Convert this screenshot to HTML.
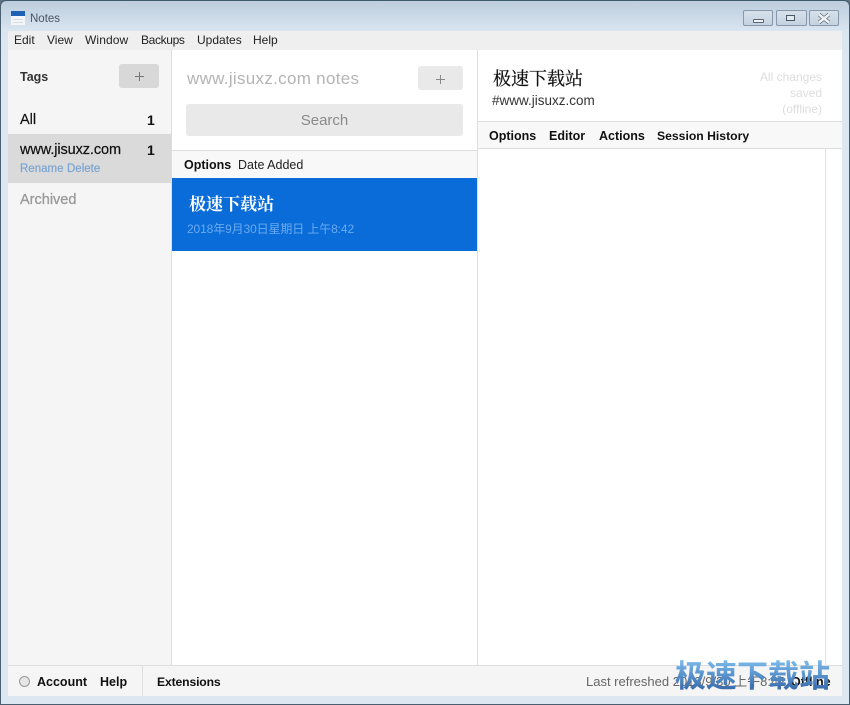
<!DOCTYPE html>
<html><head><meta charset="utf-8">
<style>
html,body{margin:0;padding:0;width:850px;height:705px;overflow:hidden;background:#5f7480}
body{position:relative;font-family:"Liberation Sans","Noto Sans CJK SC",sans-serif;color:#111}
div,span.a{position:absolute;white-space:nowrap}
.t{line-height:18px;height:18px}
.b{font-weight:bold}
.wb{position:absolute;top:10px;height:16px;box-sizing:border-box;border:1px solid #8796a8;border-radius:2px;background:linear-gradient(#d6e1eb,#c4d2e0)}
</style></head><body>
<div style="left:0;top:0;width:850px;height:705px;box-sizing:border-box;border:1px solid #4a6070;border-top-color:#3f5a68;border-radius:6px 6px 0 0;background:linear-gradient(#bccddd 0,#d9e5f0 30px,#dce7f1 60px,#dce7f1 100%)"></div>

<!-- title -->
<div style="left:11px;top:11px;width:14px;height:14px;background:#f4f6f8"></div>
<div style="left:11px;top:11px;width:14px;height:5px;background:#1f62b4"></div>
<div style="left:13px;top:19px;width:10px;height:1px;background:#d5dbe2"></div>
<div style="left:13px;top:22px;width:10px;height:1px;background:#d5dbe2"></div>
<div class="t" style="left:30px;top:10px;font-size:11.5px;color:#4a5560">Notes</div>
<div class="wb" style="left:743px;width:30px"></div>
<div style="left:753px;top:19px;width:9px;height:2px;border:1px solid #5a6672;border-radius:1px;background:#eef2f6"></div>
<div class="wb" style="left:776px;width:31px"></div>
<div style="left:786px;top:15px;width:9px;height:6px;box-sizing:border-box;border:1px solid #4a5664;background:#e0e8f0"></div>
<div class="wb" style="left:809px;width:30px"></div>
<svg style="position:absolute;left:817px;top:13px" width="14" height="11" viewBox="0 0 14 11"><path d="M2 1.5L12 9.5M12 1.5L2 9.5" stroke="#5a6672" stroke-width="4" fill="none"/><path d="M2 1.5L12 9.5M12 1.5L2 9.5" stroke="#eef2f6" stroke-width="2.6" fill="none"/></svg>

<!-- app -->
<div style="left:8px;top:31px;width:834px;height:635px;background:#fff"></div>
<div style="left:8px;top:31px;width:834px;height:19px;background:#efefef"></div>
<div class="t" style="left:14px;top:31px;font-size:12px;color:#222">Edit</div>
<div class="t" style="left:47px;top:31px;font-size:12px;color:#222">View</div>
<div class="t" style="left:85px;top:31px;font-size:12px;color:#222;letter-spacing:.1px">Window</div>
<div class="t" style="left:141px;top:31px;font-size:12px;color:#222;letter-spacing:-.35px">Backups</div>
<div class="t" style="left:197px;top:31px;font-size:12px;color:#222">Updates</div>
<div class="t" style="left:253px;top:31px;font-size:12px;color:#222">Help</div>

<!-- sidebar -->
<div style="left:8px;top:50px;width:163px;height:615px;background:#f5f5f5"></div>
<div style="left:171px;top:50px;width:1px;height:615px;background:#dedede"></div>
<div class="t b" style="left:20px;top:68px;font-size:12.5px;color:#333">Tags</div>
<div style="left:119px;top:64px;width:40px;height:24px;border-radius:3px;background:#d8d8d8"></div>
<div style="left:135px;top:76px;width:9px;height:1px;background:#777"></div>
<div style="left:139px;top:72px;width:1px;height:9px;background:#777"></div>
<div class="t" style="left:20px;top:111px;font-size:14.5px;color:#111;-webkit-text-stroke:.2px #111">All</div>
<div class="t b" style="left:147px;top:111px;font-size:14px">1</div>
<div style="left:8px;top:134px;width:163px;height:49px;background:#dadada"></div>
<div class="t" style="left:20px;top:141px;font-size:14.5px;color:#111;letter-spacing:-.1px;-webkit-text-stroke:.2px #111">www.jisuxz.com</div>
<div class="t b" style="left:147px;top:141px;font-size:14px">1</div>
<div class="t" style="left:20px;top:160px;font-size:11.5px;color:#7ba4d2;-webkit-text-stroke:.2px #7ba4d2">Rename</div>
<div class="t" style="left:67px;top:160px;font-size:11.5px;color:#7ba4d2;-webkit-text-stroke:.2px #7ba4d2">Delete</div>
<div class="t" style="left:20px;top:191px;font-size:14.5px;color:#999;-webkit-text-stroke:.3px #999">Archived</div>

<!-- notes list -->
<div style="left:477px;top:50px;width:1px;height:615px;background:#dedede"></div>
<div class="t" style="left:187px;top:70px;font-size:17px;color:#b4b4b4;letter-spacing:.3px">www.jisuxz.com notes</div>
<div style="left:418px;top:66px;width:45px;height:24px;border-radius:3px;background:#e9e9e9"></div>
<div style="left:436px;top:79px;width:9px;height:1px;background:#888"></div>
<div style="left:440px;top:75px;width:1px;height:9px;background:#888"></div>
<div style="left:186px;top:104px;width:277px;height:32px;border-radius:3px;background:#e9e9e9"></div>
<div class="t" style="left:186px;top:112px;width:277px;text-align:center;font-size:15px;color:#8a8a8a">Search</div>
<div style="left:172px;top:150px;width:305px;height:1px;background:#dedede"></div>
<div style="left:172px;top:151px;width:305px;height:27px;background:#f8f8f8"></div>
<div class="t b" style="left:184px;top:156px;font-size:12.5px">Options</div>
<div class="t" style="left:238px;top:156px;font-size:12.5px;color:#222">Date Added</div>
<div style="left:172px;top:178px;width:305px;height:73px;background:#0a6cd8"></div>
<div class="t b" style="left:189px;top:193px;font-size:17px;line-height:20px;height:20px;color:#fff;font-family:'Noto Serif CJK SC','Noto Sans CJK SC',serif">极速下载站</div>
<div class="t" style="left:187px;top:220px;font-size:12px;color:#6aaaf0;letter-spacing:-.12px">2018年9月30日星期日 上午8:42</div>

<!-- editor -->
<div class="t" style="left:493px;top:67px;font-size:18px;line-height:22px;height:22px;color:#111;font-family:'Noto Serif CJK SC','Noto Sans CJK SC',serif;-webkit-text-stroke:.25px #111">极速下载站</div>
<div class="t" style="left:492px;top:92px;font-size:13.5px;color:#333">#www.jisuxz.com</div>
<div class="t" style="left:722px;top:68px;width:100px;text-align:right;font-size:12px;color:#ddd">All changes</div>
<div class="t" style="left:722px;top:84px;width:100px;text-align:right;font-size:12px;color:#ddd">saved</div>
<div class="t" style="left:722px;top:100px;width:100px;text-align:right;font-size:12px;color:#ddd">(offline)</div>
<div style="left:478px;top:121px;width:364px;height:1px;background:#dedede"></div>
<div style="left:478px;top:122px;width:364px;height:26px;background:#f8f8f8"></div>
<div style="left:478px;top:148px;width:364px;height:1px;background:#dedede"></div>
<div class="t b" style="left:489px;top:127px;font-size:12.5px">Options</div>
<div class="t b" style="left:549px;top:127px;font-size:12.5px">Editor</div>
<div class="t b" style="left:599px;top:127px;font-size:12.5px">Actions</div>
<div class="t b" style="left:657px;top:127px;font-size:12.2px">Session History</div>

<div style="left:825px;top:149px;width:1px;height:516px;background:#e2e2e2"></div>

<!-- footer -->
<div style="left:8px;top:665px;width:834px;height:1px;background:#dedede"></div>
<div style="left:8px;top:666px;width:834px;height:30px;background:#f5f5f5"></div>
<div style="left:142px;top:666px;width:1px;height:30px;background:#dedede"></div>
<div style="left:19px;top:676px;width:11px;height:11px;box-sizing:border-box;border:1px solid #999;border-radius:50%;background:#e6e6e6"></div>
<div class="t b" style="left:37px;top:673px;font-size:12.5px">Account</div>
<div class="t b" style="left:100px;top:673px;font-size:12.5px">Help</div>
<div class="t b" style="left:157px;top:673px;font-size:12.2px;letter-spacing:-.15px">Extensions</div>
<div class="t" style="left:586px;top:673px;font-size:13px;color:#666">Last refreshed 2018/9/30 上午8:42</div>
<div class="t b" style="left:791px;top:673px;font-size:12.5px">Offline</div>

<!-- watermark -->
<div style="left:675px;top:654px;font-size:31px;line-height:40px;font-weight:bold;font-family:'Noto Sans CJK SC',sans-serif;background:linear-gradient(#7cbcec 15%,#3a6eb0 85%);-webkit-background-clip:text;background-clip:text;color:transparent">极速下载站</div>
</body></html>
